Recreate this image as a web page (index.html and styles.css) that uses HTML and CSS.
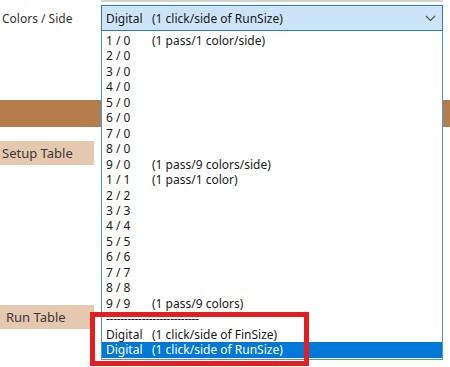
FILE: index.html
```html
<!DOCTYPE html>
<html lang="en">
<head>
  <meta charset="UTF-8" />
  <title>Colors / Side</title>
  <link rel="stylesheet" href="styles.css">
</head>
<body>
  <div class="top-edge"></div>

  <div class="field">
    <label class="field-label">Colors / Side</label>
    <div class="combo-wrap">
      <div class="combo">
        <span class="col-a">Digital</span>
        <span class="col-b">(1 click/side of RunSize)</span>
        <svg class="chevron" width="11" height="7" viewBox="0 0 11 7">
          <path d="M1 1 L5.5 5.5 L10 1" fill="none" stroke="#555" stroke-width="1.2" />
        </svg>
      </div>
      <ul class="list">
        <li><span class="col-a">1 / 0</span><span class="col-b">(1 pass/1 color/side)</span></li>
        <li><span class="col-a">2 / 0</span></li>
        <li><span class="col-a">3 / 0</span></li>
        <li><span class="col-a">4 / 0</span></li>
        <li><span class="col-a">5 / 0</span></li>
        <li><span class="col-a">6 / 0</span></li>
        <li><span class="col-a">7 / 0</span></li>
        <li><span class="col-a">8 / 0</span></li>
        <li><span class="col-a">9 / 0</span><span class="col-b">(1 pass/9 colors/side)</span></li>
        <li><span class="col-a">1 / 1</span><span class="col-b">(1 pass/1 color)</span></li>
        <li><span class="col-a">2 / 2</span></li>
        <li><span class="col-a">3 / 3</span></li>
        <li><span class="col-a">4 / 4</span></li>
        <li><span class="col-a">5 / 5</span></li>
        <li><span class="col-a">6 / 6</span></li>
        <li><span class="col-a">7 / 7</span></li>
        <li><span class="col-a">8 / 8</span></li>
        <li><span class="col-a">9 / 9</span><span class="col-b">(1 pass/9 colors)</span></li>
        <li><span class="dashes">--------------------------</span></li>
        <li><span class="col-a">Digital</span><span class="col-b">(1 click/side of FinSize)</span></li>
        <li class="selected"><span class="col-a">Digital</span><span class="col-b">(1 click/side of RunSize)</span></li>
      </ul>
      <div class="callout"></div>
    </div>
  </div>

  <div class="band"></div>

  <div class="tab tab-setup">Setup Table</div>
  <div class="tab tab-run">Run Table</div>
</body>
</html>
```

FILE: styles.css
```css
body {
  margin: 0;
  background: #fff;
  font-family: "Noto Sans", sans-serif;
  font-size: 12px;
  color: #1a1a1a;
  width: 450px;
  height: 367px;
  overflow: hidden;
}
.top-edge {
  margin-left: 101px;
  width: 342px;
  height: 2px;
  background: #d4d4d4;
}
.field {
  display: flex;
  align-items: center;
  margin-top: 3px;
  height: 26px;
}
.field-label {
  width: 101px;
  padding-left: 2px;
  box-sizing: border-box;
  color: #333;
}
.combo-wrap {
  position: relative;
  width: 342px;
}
.combo {
  display: flex;
  align-items: center;
  height: 26px;
  box-sizing: border-box;
  border: 1px solid #2f7bc4;
  background: #cce4f7;
  padding-left: 4px;
}
.col-a {
  width: 46px;
  flex-shrink: 0;
}
.col-b {
  flex: 1;
}
.chevron {
  margin-right: 6px;
}
.list {
  position: absolute;
  top: 26px;
  left: 0;
  width: 342px;
  box-sizing: border-box;
  margin: 0;
  padding: 2px 0 1px;
  list-style: none;
  background: #fff;
  border: 1px solid #4a98e0;
  border-top: none;
  z-index: 2;
}
.list li {
  display: flex;
  height: 15.46px;
  line-height: 15.46px;
  padding-left: 4px;
}
.list li.selected {
  background: #0078d7;
  color: #fff;
}
.dashes {
  letter-spacing: -0.3px;
}
.callout {
  position: absolute;
  left: -11px;
  top: 307px;
  width: 219px;
  height: 54px;
  box-sizing: border-box;
  border: 5px solid #e41e1e;
  z-index: 3;
}
.band {
  margin-top: 69px;
  height: 27px;
  background: #b57d4a;
}
.tab {
  width: 94px;
  height: 24px;
  line-height: 24px;
  background: #e6c8ae;
  color: #3a3a3a;
  font-size: 13px;
}
.tab-setup {
  margin-top: 14px;
  padding-left: 2px;
  box-sizing: border-box;
}
.tab-run {
  margin-top: 140px;
  padding-left: 6px;
  box-sizing: border-box;
}
```
